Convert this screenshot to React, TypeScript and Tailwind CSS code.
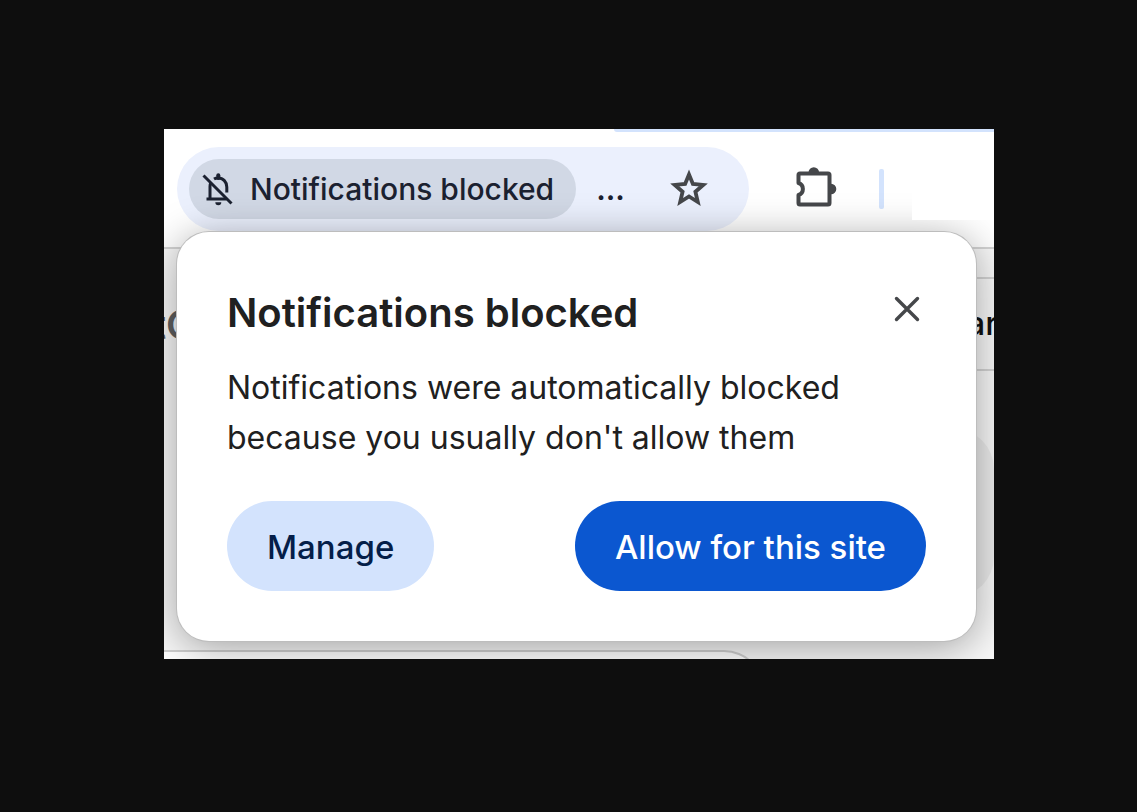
import type { ReactNode } from "react";

function BellOffIcon() {
  return (
    <svg viewBox="0 0 32 34" className="h-[34px] w-8 shrink-0" fill="none" stroke="currentColor" strokeWidth="3" aria-hidden="true">
      <path d="M8 27V14.5c0-1.200.2-2.300.7-3.300M12 7c1.200-.7 2.600-1 4.200-1 5 0 8.600 4 8.600 9v5.500M4.500 27h20" />
      <path d="M16.300 6V3.300" strokeWidth="4" strokeLinecap="round" />
      <path d="M13.300 30.200h6a3 3 0 0 1-6 0z" fill="currentColor" stroke="none" />
      <path d="M1.500 3.500l28 28" />
    </svg>
  );
}

function StarIcon() {
  return (
    <svg viewBox="0 0 40 40" className="h-10 w-10" fill="none" stroke="currentColor" strokeWidth="3.800" aria-hidden="true">
      <path d="M20 5.500l3.900 9.500 10.300.9-7.800 6.800 2.400 10.300-8.800-5.500-8.800 5.500 2.400-10.300-7.800-6.800 10.300-.9z" />
    </svg>
  );
}

function PuzzleIcon() {
  return (
    <svg viewBox="0 0 42 42" className="h-[42px] w-[42px]" aria-hidden="true">
      <path
        d="M5 7.500h28q1.500 0 1.500 1.500v28q0 1.500-1.500 1.500H5q-1.500 0-1.500-1.500v-8a6.300 6.300 0 0 0 0-12V9Q3.500 7.500 5 7.500z"
        fill="none"
        stroke="currentColor"
        strokeWidth="4"
        strokeLinejoin="round"
      />
      <path d="M13.500 6.500a5.300 5.300 0 0 1 10.600 0zM36 17.700a5.300 5.300 0 0 1 0 10.600z" fill="currentColor" />
    </svg>
  );
}

function CloseIcon() {
  return (
    <svg viewBox="0 0 28 28" className="h-7 w-7" fill="none" stroke="currentColor" strokeWidth="3.400" strokeLinecap="round" aria-hidden="true">
      <path d="M3.500 3.500l21 21M24.500 3.500l-21 21" />
    </svg>
  );
}

function Toolbar() {
  return (
    <header className="border-b-2 border-[#d3d3d3] bg-white">
      <div className="ml-[450px] h-[3px] rounded-bl-lg bg-[#d3e3fd]" />
      <div className="flex items-start pt-[15px] pb-4 pl-[13px]">
        <div className="flex h-[84px] w-[572px] items-center rounded-full bg-[#ebf0fd] pl-3">
          <button className="flex h-15 items-center gap-4 rounded-full bg-[#d1d8e5] pr-[22px] pl-[13px] text-[30px] font-medium text-[#1b2130]">
            <BellOffIcon />
            <span className="whitespace-nowrap">Notifications blocked</span>
          </button>
          <span className="ml-5 text-[30px] font-semibold text-[#1b2130]">...</span>
          <button aria-label="Bookmark this tab" className="mr-10 ml-auto text-[#45474a]">
            <StarIcon />
          </button>
        </div>
        <button aria-label="Extensions" className="mt-[19px] ml-[46px] text-[#45474a]">
          <PuzzleIcon />
        </button>
        <div className="mt-[22px] ml-[42px] h-10 w-[5px] rounded-xs bg-[#d3e3fd]" />
        <div className="relative z-10 ml-7 h-[73px] flex-1 bg-white" />
      </div>
    </header>
  );
}

function PageBehind() {
  return (
    <div className="bg-[#f7f7f7]">
      <div className="flex h-[401px] items-start justify-between overflow-hidden">
        <p className="-ml-3 pt-[46px] text-[40px] font-semibold text-[#5f5f5f]">tC</p>
        <div className="w-[60px]">
          <div className="mt-7 flex h-[94px] items-center justify-end border-y-2 border-[#d3d3d3] text-[33px] font-medium text-[#111111]">
            <span className="-mr-1">ar</span>
          </div>
          <div className="mt-[58px] h-[168px] rounded-r-[40px] bg-[#ebebeb]" />
        </div>
      </div>
      <div className="h-[9px] overflow-hidden">
        <div className="h-20 w-[600px] rounded-tr-[40px] border-t-2 border-r-2 border-[#cfcfcf] bg-white" />
      </div>
    </div>
  );
}

function PillButton({ className, children }: { className: string; children: ReactNode }) {
  return (
    <button className={`h-[90px] rounded-full px-10 pt-1 text-[33px] font-medium whitespace-nowrap ${className}`}>
      {children}
    </button>
  );
}

function PermissionPopup() {
  return (
    <div
      role="dialog"
      aria-labelledby="popup-title"
      className="absolute inset-x-[13px] top-[103px] mr-[5px] rounded-[32px] bg-white px-[50px] pt-14 pb-[50px] text-[#202020] shadow-[0_0_0_1px_#bdbdbd,0_6px_40px_rgba(0,0,0,0.36)]"
    >
      <div className="flex items-start justify-between">
        <h1 id="popup-title" className="text-[40px] leading-[50px] font-semibold">
          Notifications blocked
        </h1>
        <button aria-label="Close" className="mt-[7px] mr-[5px] text-[#45474a]">
          <CloseIcon />
        </button>
      </div>
      <p className="mt-[25px] text-[32px] leading-[50px]">
        Notifications were automatically blocked because you usually don't allow them
      </p>
      <div className="mt-[38px] flex justify-between">
        <PillButton className="bg-[#d3e3fd] text-[#041e49]">Manage</PillButton>
        <PillButton className="bg-[#0b57d0] text-white">Allow for this site</PillButton>
      </div>
    </div>
  );
}

export default function App() {
  return (
    <main className="min-h-screen bg-[#0e0e0e] pt-[129px] pr-[143px] pb-[153px] pl-[164px] font-['Inter','Liberation_Sans',sans-serif]">
      <section className="relative overflow-hidden bg-white">
        <Toolbar />
        <PageBehind />
        <PermissionPopup />
      </section>
    </main>
  );
}
